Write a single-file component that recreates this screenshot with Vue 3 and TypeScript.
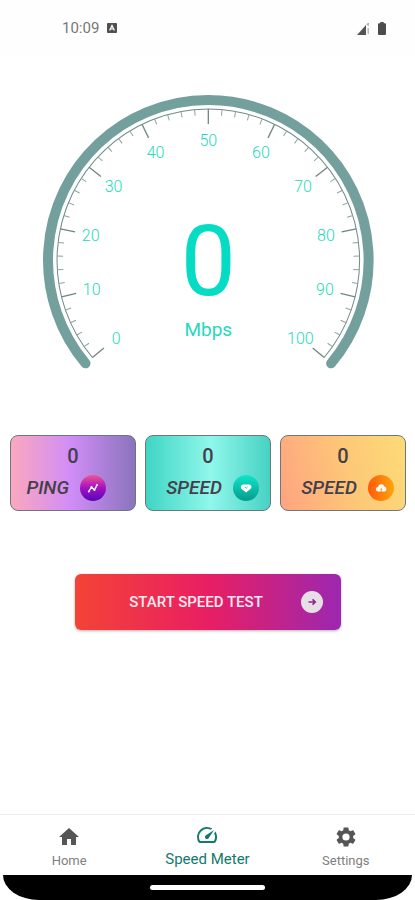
<script setup lang="ts">
import { ref } from 'vue'

interface Tick {
  x1: number
  y1: number
  x2: number
  y2: number
  major: boolean
}

const CENTER = 166
const START = -130
const SWEEP = 260

function polar(value: number, radius: number) {
  const angle = ((START + (value / 100) * SWEEP) * Math.PI) / 180
  return {
    x: CENTER + radius * Math.sin(angle),
    y: CENTER - radius * Math.cos(angle),
  }
}

function arc(radius: number): string {
  const a = polar(0, radius)
  const b = polar(100, radius)
  return `M${a.x} ${a.y}A${radius} ${radius} 0 1 1 ${b.x} ${b.y}`
}

const ticks: Tick[] = Array.from({ length: 51 }, (_, i) => {
  const major = i % 5 === 0
  const a = polar(i * 2, 151)
  const b = polar(i * 2, major ? 136 : 145)
  return { x1: a.x, y1: a.y, x2: b.x, y2: b.y, major }
})

const labels = Array.from({ length: 11 }, (_, i) => ({
  value: i * 10,
  ...polar(i * 10, 120),
}))

const speed = ref(0)
const ping = ref(0)
const download = ref(0)
const upload = ref(0)
</script>

<template>
  <div class="screen">
    <header class="status">
      <time class="clock">10:09</time>
      <svg class="status-app" viewBox="0 0 10 10" aria-hidden="true">
        <rect width="10" height="10" rx="1" fill="#505050" />
        <path d="M2.6 7.4L5 2.4l2.4 5M3.6 6h2.8" fill="none" stroke="#fff" stroke-width="1.2" />
      </svg>
      <svg class="signal" viewBox="0 0 13 13" aria-hidden="true">
        <path d="M0 13L9 3v10z" fill="#555" />
        <path d="M11.2 1v3M11.2 6v6" stroke="#aaa" stroke-width="1.2" />
        <path d="M9.500 3l1.700-1.700" stroke="#999" />
      </svg>
      <svg class="battery" viewBox="0 0 8 13" aria-hidden="true">
        <path d="M2.300 0h3.400v1.300H7q1 0 1 1V12q0 1-1 1H1q-1 0-1-1V2.300q0-1 1-1h1.300z" fill="#4c4c4c" />
      </svg>
    </header>

    <main class="content">
      <svg class="gauge" viewBox="0 0 332 276" role="img" aria-label="Speed gauge">
        <path :d="arc(160)" class="ring" />
        <path :d="arc(151)" class="scale" />
        <line
          v-for="(t, i) in ticks"
          :key="i"
          :x1="t.x1"
          :y1="t.y1"
          :x2="t.x2"
          :y2="t.y2"
          :class="t.major ? 'major' : 'minor'"
        />
        <text v-for="l in labels" :key="l.value" :x="l.x" :y="l.y + 6" class="label">{{ l.value }}</text>
        <text x="166" y="201" class="reading">{{ speed }}</text>
        <text x="166" y="242" class="unit">Mbps</text>
      </svg>

      <section class="cards">
        <article class="card ping">
          <span class="value">{{ ping }}</span>
          <div class="row">
            <span class="name">PING</span>
            <svg class="badge" viewBox="0 0 26 26" aria-hidden="true">
              <defs>
                <linearGradient id="ping-fill" x2="0" y2="1">
                  <stop offset="0" stop-color="#f0568f" />
                  <stop offset=".5" stop-color="#a310c4" />
                  <stop offset="1" stop-color="#5706b8" />
                </linearGradient>
              </defs>
              <circle cx="13" cy="13" r="13" fill="url(#ping-fill)" />
              <path d="M8.800 16.500l2.700-4.500 3 3L17 10" fill="none" stroke="#fff" stroke-width="1.400" stroke-linejoin="round" />
              <circle cx="8.800" cy="16.500" r="1" fill="#fff" />
              <circle cx="11.500" cy="12" r="1" fill="#fff" />
              <circle cx="14.500" cy="15" r="1" fill="#fff" />
              <circle cx="17" cy="10" r="1" fill="#fff" />
            </svg>
          </div>
        </article>
        <article class="card down">
          <span class="value">{{ download }}</span>
          <div class="row">
            <span class="name">SPEED</span>
            <svg class="badge" viewBox="0 0 26 26" aria-hidden="true">
              <defs>
                <linearGradient id="down-fill" x2="0" y2="1">
                  <stop offset="0" stop-color="#10e5cb" />
                  <stop offset="1" stop-color="#079b8a" />
                </linearGradient>
              </defs>
              <circle cx="13" cy="13" r="13" fill="url(#down-fill)" />
              <path d="M10 9.500h6.500a2.500 2.500 0 0 1 .8 4.600L13.200 17.500 9 14.300a2.600 2.600 0 0 1 1-4.800z" fill="#fff" />
              <path d="M11.900 12l1.300 1.300 1.300-1.300" fill="none" stroke="#12bba7" stroke-width=".9" />
            </svg>
          </div>
        </article>
        <article class="card up">
          <span class="value">{{ upload }}</span>
          <div class="row">
            <span class="name">SPEED</span>
            <svg class="badge" viewBox="0 0 26 26" aria-hidden="true">
              <defs>
                <linearGradient id="up-fill">
                  <stop offset="0" stop-color="#ff5a0a" />
                  <stop offset="1" stop-color="#ffa50d" />
                </linearGradient>
              </defs>
              <circle cx="13" cy="13" r="13" fill="url(#up-fill)" />
              <path d="M10.300 16.500a2.300 2.300 0 0 1-.3-4.600 3.300 3.300 0 0 1 6.400-.4 2.600 2.600 0 0 1 .3 5z" fill="#fff" />
              <path d="M13.200 17v-3.200M12 14.700l1.200-1.200 1.200 1.200" fill="none" stroke="#ff8414" stroke-width=".9" />
            </svg>
          </div>
        </article>
      </section>

      <button class="start" type="button">
        <span class="start-text">START SPEED TEST</span>
        <svg class="start-icon" viewBox="0 0 22 22" aria-hidden="true">
          <circle cx="11" cy="11" r="11" fill="#e6e0e6" />
          <path d="M7.500 11h6.500M11.500 8.300l2.800 2.700-2.800 2.700" fill="none" stroke="#9a1c9c" stroke-width="1.600" />
        </svg>
      </button>
    </main>

    <nav class="tabs">
      <a class="tab" href="#home">
        <svg class="tab-icon" viewBox="0 0 24 24" aria-hidden="true">
          <path d="M10 20v-6h4v6h5v-8h3L12 3 2 12h3v8z" fill="currentColor" />
        </svg>
        <span>Home</span>
      </a>
      <a class="tab active" href="#speed-meter" aria-current="page">
        <svg class="tab-icon" viewBox="0 0 24 24" aria-hidden="true">
          <path d="M20.380 8.570l-1.230 1.850a8 8 0 0 1-.220 7.580H5.070A8 8 0 0 1 15.580 6.850l1.850-1.230A10 10 0 0 0 3.350 19a2 2 0 0 0 1.720 1h13.850a2 2 0 0 0 1.740-1 10 10 0 0 0-.270-10.440zm-9.790 6.840a2 2 0 0 0 2.830 0l5.660-8.490-8.490 5.660a2 2 0 0 0 0 2.830z" fill="currentColor" />
        </svg>
        <span>Speed Meter</span>
      </a>
      <a class="tab" href="#settings">
        <svg class="tab-icon" viewBox="0 0 24 24" aria-hidden="true">
          <path d="M19.140 12.940c.04-.3.060-.61.060-.94 0-.32-.02-.64-.07-.94l2.030-1.580a.49.49 0 0 0 .12-.61l-1.920-3.320a.488.488 0 0 0-.59-.22l-2.390.96c-.5-.38-1.030-.7-1.620-.94l-.36-2.540a.484.484 0 0 0-.48-.41h-3.840c-.24 0-.43.17-.47.41l-.36 2.540c-.59.24-1.130.57-1.620.94l-2.390-.96c-.22-.08-.47 0-.59.22L2.740 8.870c-.12.21-.08.47.12.61l2.030 1.580c-.05.3-.09.63-.09.94s.02.64.07.94l-2.030 1.580a.49.49 0 0 0-.12.61l1.920 3.320c.12.22.37.29.59.22l2.390-.96c.5.38 1.030.7 1.620.94l.36 2.540c.05.24.24.41.48.41h3.840c.24 0 .44-.17.47-.41l.36-2.540c.59-.24 1.130-.56 1.620-.94l2.390.96c.22.08.47 0 .59-.22l1.920-3.320c.12-.22.07-.47-.12-.61l-2.010-1.580zM12 15.600A3.600 3.600 0 1 1 12 8.400a3.600 3.600 0 0 1 0 7.200z" fill="currentColor" />
        </svg>
        <span>Settings</span>
      </a>
    </nav>
    <div class="system-bar"><span class="handle"></span></div>
  </div>
</template>

<style>
body {
  margin: 0;
  background: #fff;
}
</style>

<style scoped>
.screen {
  display: flex;
  flex-direction: column;
  min-height: 100vh;
  font-family: Roboto, "Liberation Sans", sans-serif;
  background: #fff;
}

.status {
  display: flex;
  align-items: center;
  height: 56px;
  padding: 0 29px 0 62px;
  background: #fefefe;
}

.clock {
  font-size: 15px;
  line-height: 20px;
  color: #777;
}

.status-app {
  width: 10px;
  height: 10px;
  margin-left: 8px;
}

.signal {
  width: 13px;
  height: 13px;
  margin-left: auto;
}

.battery {
  width: 8px;
  height: 13px;
  margin-left: 8px;
}

.content {
  display: flex;
  flex-direction: column;
  align-items: center;
  padding: 38px 9px 24px 10px;
}

.gauge {
  width: 84%;
}

.ring {
  fill: none;
  stroke: #739f9c;
  stroke-width: 10;
  stroke-linecap: round;
}

.scale {
  fill: none;
  stroke: #6f8a88;
  stroke-width: 1;
}

.major {
  stroke: #6f8684;
  stroke-width: 1.3;
}

.minor {
  stroke: #8fa3a1;
  stroke-width: 1;
}

.label,
.reading,
.unit {
  text-anchor: middle;
  fill: #25d9bd;
}

.label {
  font-size: 16px;
  font-weight: 300;
}

.reading {
  font-size: 98px;
  fill: #06dcc3;
}

.unit {
  font-size: 19px;
}

.cards {
  display: grid;
  grid-template-columns: repeat(3, 1fr);
  gap: 9px;
  width: 100%;
  margin-top: 64px;
}

.card {
  display: flex;
  flex-direction: column;
  align-items: center;
  padding: 8px 0 9px;
  border: 1px solid #6f7580;
  border-radius: 8px;
  color: #453f49;
}

.ping {
  background: linear-gradient(90deg, #fba8bd, #d18df7 48%, #8a74bd);
}

.down {
  background: linear-gradient(90deg, #3fd5c4, #90f7eb 52%, #47d2c3);
}

.up {
  background: linear-gradient(75deg, #ffa381, #fdc877 55%, #fddb78);
}

.value {
  font-size: 20px;
  line-height: 25px;
  font-weight: 500;
}

.row {
  display: flex;
  align-items: center;
  align-self: flex-end;
  gap: 11px;
  margin: 6px 11px 0 0;
}

.ping .row {
  margin-right: 29px;
}

.name {
  font-size: 19px;
  line-height: 26px;
  font-style: italic;
  font-weight: 500;
}

.badge {
  width: 26px;
  height: 26px;
}

.start {
  display: flex;
  align-items: center;
  width: 67%;
  height: 56px;
  margin-top: 63px;
  padding: 0 18px 0 16px;
  border: 0;
  border-radius: 6px;
  color: #ffe9ef;
  font-family: inherit;
  font-size: 15px;
  font-weight: 500;
  background: linear-gradient(90deg, #f44336, #e91e63 50%, #9c27b0);
  box-shadow: 0 1px 3px rgb(0 0 0 / 30%);
}

.start-text {
  flex: 1;
  text-align: center;
}

.start-icon {
  width: 22px;
  height: 22px;
}

.tabs {
  display: grid;
  grid-template-columns: repeat(3, 1fr);
  height: 60px;
  margin-top: auto;
  border-top: 1px solid #eee;
}

.tab {
  display: flex;
  flex-direction: column;
  align-items: center;
  gap: 3px;
  padding-top: 10px;
  color: #555;
  font-size: 13px;
  line-height: 18px;
  text-decoration: none;
}

.tab span {
  color: #808080;
}

.tab.active,
.tab.active span {
  color: #12796d;
}

.tab.active {
  gap: 2px;
  padding-top: 8px;
  font-size: 15px;
  line-height: 20px;
}

.tab-icon {
  width: 24px;
  height: 24px;
}

.system-bar {
  display: flex;
  justify-content: center;
  height: 25px;
  margin: 0 3px;
  border-radius: 0 0 36px 36px / 0 0 25px 25px;
  background: #000;
}

.handle {
  width: 28%;
  height: 5px;
  margin-top: 10px;
  border-radius: 3px;
  background: #fff;
}
</style>
